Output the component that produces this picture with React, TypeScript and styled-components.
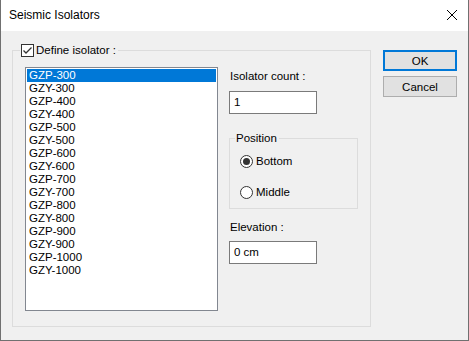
import styled, { createGlobalStyle } from "styled-components";

const GlobalStyle = createGlobalStyle`
  html, body {
    margin: 0;
    padding: 0;
    background: #f0f0f0;
  }
  * {
    box-sizing: border-box;
  }
`;

const Window = styled.div`
  width: 469px;
  height: 341px;
  display: flex;
  flex-direction: column;
  border: 1px solid #707070;
  border-top: none;
  background: #f0f0f0;
  font-family: "Liberation Sans", Arial, sans-serif;
  font-size: 11.5px;
  color: #000;
`;

const TitleBar = styled.div`
  height: 31px;
  flex: none;
  display: flex;
  align-items: center;
  justify-content: space-between;
  padding: 0 6px 1px 8px;
  background: #fff;
  font-size: 12px;
`;

const CloseButton = styled.div`
  width: 12px;
  height: 12px;
  margin-right: 4px;
  display: flex;
`;

const Client = styled.div`
  flex: 1;
  display: flex;
  align-items: flex-start;
  padding: 19px 0 0 11px;
`;

const Group = styled.div<{ w: number; h: number }>`
  position: relative;
  width: ${(p) => p.w}px;
  height: ${(p) => p.h}px;
  border: 1px solid #dcdcdc;
  flex: none;
`;

const Legend = styled.div<{ left: number }>`
  position: absolute;
  top: -9px;
  left: ${(p) => p.left}px;
  display: flex;
  align-items: center;
  gap: 2px;
  padding: 0 2px 0 1px;
  height: 16px;
  line-height: 16px;
  background: #f0f0f0;
  white-space: nowrap;
`;

const GroupBody = styled.div`
  display: flex;
  align-items: flex-start;
  gap: 11px;
  padding: 16px 0 0 12px;
`;

const ListBox = styled.div`
  width: 193px;
  height: 244px;
  flex: none;
  background: #fff;
  border: 1px solid #828790;
  padding: 1px;
`;

const ListItem = styled.div<{ selected?: boolean }>`
  height: 13px;
  line-height: 13px;
  padding-left: 2px;
  white-space: nowrap;
  background: ${(p) => (p.selected ? "#0078d7" : "transparent")};
  color: ${(p) => (p.selected ? "#fff" : "#000")};
`;

const Column = styled.div`
  display: flex;
  flex-direction: column;
  align-items: flex-start;
`;

const Label = styled.div<{ mt: number }>`
  margin-top: ${(p) => p.mt}px;
  height: 16px;
  line-height: 16px;
  padding-left: 1px;
`;

const TextInput = styled.div<{ mt: number }>`
  margin-top: ${(p) => p.mt}px;
  width: 88px;
  height: 23px;
  line-height: 21px;
  padding-left: 4px;
  background: #fff;
  border: 1px solid #7a7a7a;
`;

const RadioRow = styled.div<{ mt: number }>`
  display: flex;
  align-items: center;
  gap: 3px;
  margin: ${(p) => p.mt}px 0 0 10px;
  height: 13px;
  line-height: 13px;
`;

const RadioCircle = styled.span<{ checked?: boolean }>`
  width: 13px;
  height: 13px;
  border-radius: 50%;
  border: 1px solid #333;
  background: #fff;
  display: flex;
  align-items: center;
  justify-content: center;
  flex: none;
  &::after {
    content: "";
    display: ${(p) => (p.checked ? "block" : "none")};
    width: 7px;
    height: 7px;
    border-radius: 50%;
    background: #333;
  }
`;

const Buttons = styled.div`
  display: flex;
  flex-direction: column;
  gap: 5px;
  margin-left: 12px;
`;

const Button = styled.div<{ primary?: boolean }>`
  width: 74px;
  height: 21px;
  display: flex;
  align-items: center;
  justify-content: center;
  background: #e1e1e1;
  border: ${(p) => (p.primary ? "2px solid #0078d7" : "1px solid #adadad")};
`;

const CheckBox = () => (
  <svg width="13" height="13" viewBox="0 0 13 13">
    <rect x="0.5" y="0.5" width="12" height="12" fill="#fff" stroke="#333" />
    <path d="M2.5 6.5 L5 9 L10.5 3.5" fill="none" stroke="#333" strokeWidth="1.3" />
  </svg>
);

const isolators = [
  "GZP-300", "GZY-300", "GZP-400", "GZY-400", "GZP-500", "GZY-500",
  "GZP-600", "GZY-600", "GZP-700", "GZY-700", "GZP-800", "GZY-800",
  "GZP-900", "GZY-900", "GZP-1000", "GZY-1000",
];

export default function App() {
  return (
    <>
      <GlobalStyle />
      <Window>
        <TitleBar>
          <span>Seismic Isolators</span>
          <CloseButton>
            <svg width="12" height="12" viewBox="0 0 12 12">
              <path d="M1 1 L11 11 M11 1 L1 11" stroke="#000" strokeWidth="1" />
            </svg>
          </CloseButton>
        </TitleBar>
        <Client>
          <Group w={359} h={277}>
            <Legend left={7}>
              <CheckBox />
              <span>Define isolator :</span>
            </Legend>
            <GroupBody>
              <ListBox>
                {isolators.map((name, i) => (
                  <ListItem key={name} selected={i === 0}>
                    {name}
                  </ListItem>
                ))}
              </ListBox>
              <Column>
                <Label mt={1}>Isolator count :</Label>
                <TextInput mt={7}>1</TextInput>
                <Group w={129} h={71} style={{ marginTop: 24 }}>
                  <Legend left={5}>Position</Legend>
                  <RadioRow mt={16}>
                    <RadioCircle checked />
                    <span>Bottom</span>
                  </RadioRow>
                  <RadioRow mt={18}>
                    <RadioCircle />
                    <span>Middle</span>
                  </RadioRow>
                </Group>
                <Label mt={10}>Elevation :</Label>
                <TextInput mt={6}>0 cm</TextInput>
              </Column>
            </GroupBody>
          </Group>
          <Buttons>
            <Button primary>OK</Button>
            <Button>Cancel</Button>
          </Buttons>
        </Client>
      </Window>
    </>
  );
}
